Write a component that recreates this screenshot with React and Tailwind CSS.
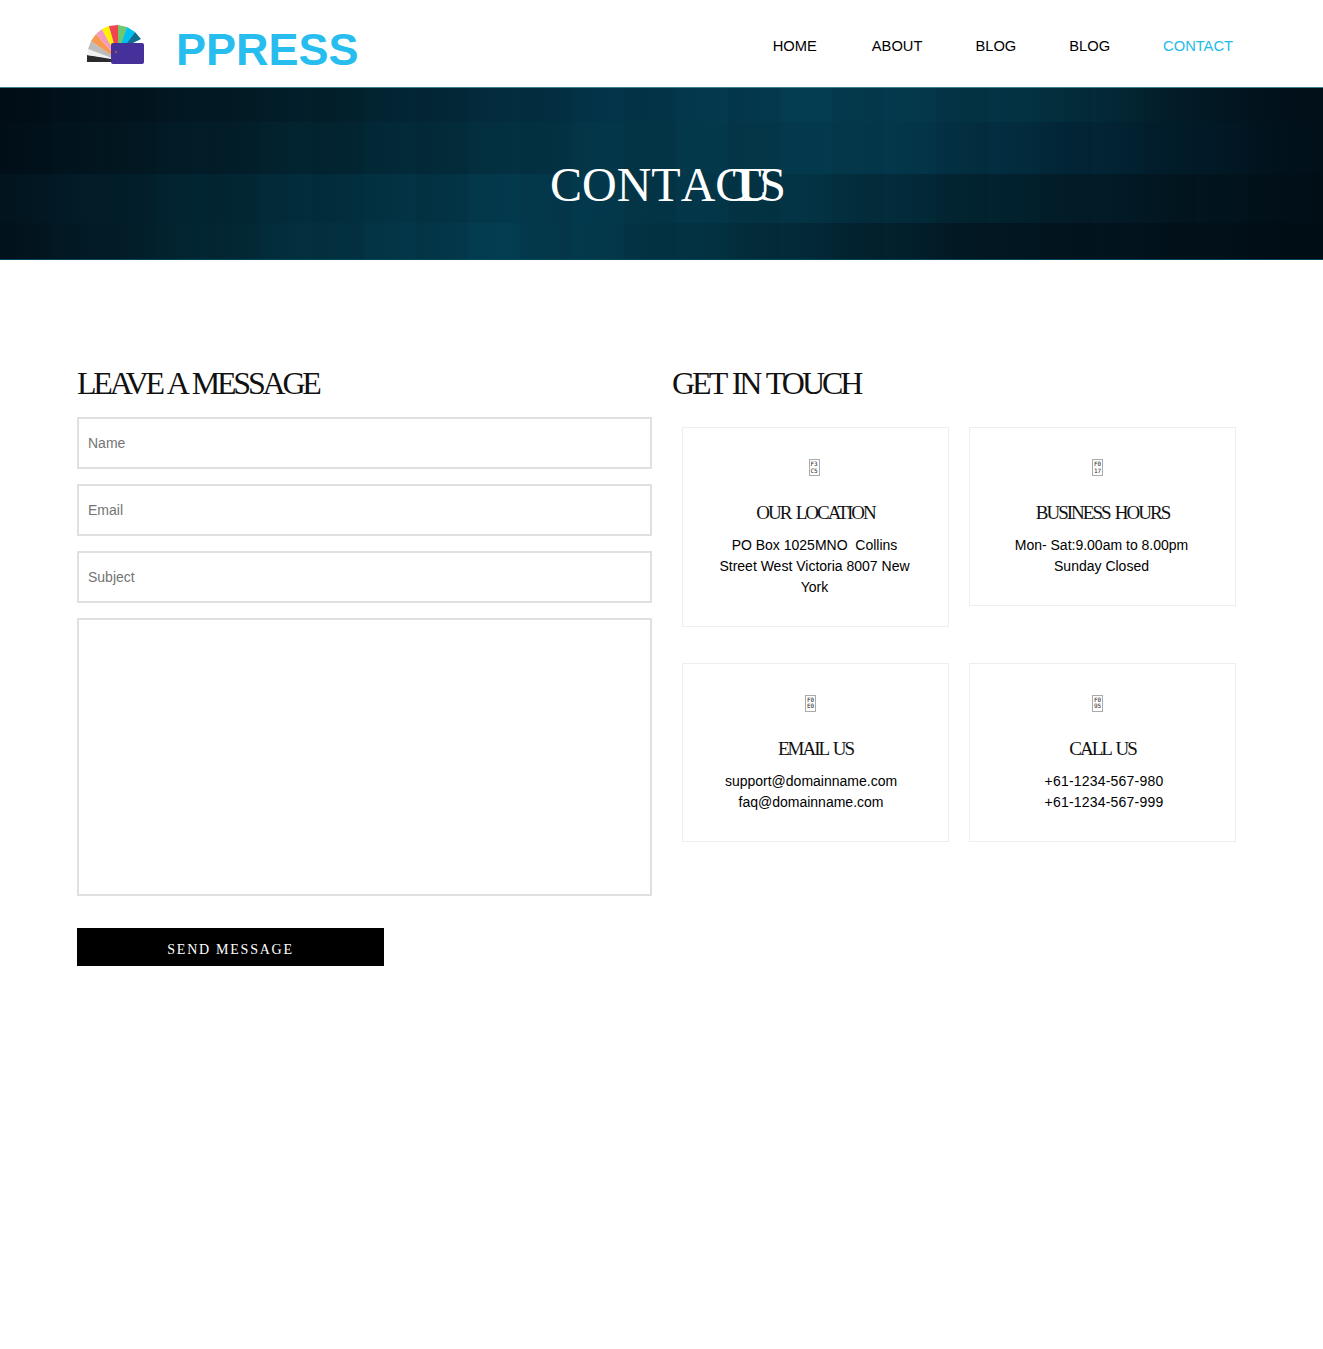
import React from 'react';

const navLinks = ['HOME', 'ABOUT', 'BLOG', 'BLOG', 'CONTACT'];

const cards = [
  {
    code: ['F3', 'C5'],
    title: 'OUR LOCATION',
    lines: ['PO Box 1025MNO  Collins', 'Street West Victoria 8007 New', 'York'],
    shift: 'pr-[2px]',
    boxShift: 'pr-[3px]',
  },
  {
    code: ['F0', '17'],
    title: 'BUSINESS HOURS',
    lines: ['Mon- Sat:9.00am to 8.00pm', 'Sunday Closed'],
    shift: 'pr-[2px]',
    boxShift: 'pr-[10px]',
  },
  {
    code: ['F0', 'E0'],
    title: 'EMAIL US',
    lines: ['support@domainname.com', 'faq@domainname.com'],
    shift: 'pr-[9px]',
    boxShift: 'pr-[10px]',
  },
  {
    code: ['F0', '95'],
    title: 'CALL US',
    lines: ['+61-1234-567-980', '+61-1234-567-999'],
    shift: 'pl-[3px] tracking-[0.2px]',
    boxShift: 'pr-[10px]',
  },
];

const serif = 'font-["Liberation_Serif",serif]';

const Logo = () => (
  <svg width="62" height="42" viewBox="0 0 62 42" className="-ml-[1px]">
    <path d="M2 32 L26 35 L26 39 L2 39 Z" fill="#2b2b2b" />
    <path d="M3 26 L2 32 L26 36 L26 34 Z" fill="#f1f1f1" />
    <path d="M6 18 L3 26 L27 35 L27 32 Z" fill="#bdbdbd" />
    <path d="M11 11 L6 18 L28 33 L28 30 Z" fill="#f9994f" />
    <path d="M17 6 L11 11 L29 31 L29 28 Z" fill="#f49ac1" />
    <path d="M24 3 L17 6 L30 30 L31 27 Z" fill="#fff200" />
    <path d="M33 2 L24 3 L31 28 L34 26 Z" fill="#f0444f" />
    <path d="M42 4 L33 2 L33 28 L36 26 Z" fill="#6fc86e" />
    <path d="M50 9 L42 4 L34 28 L38 26 Z" fill="#00bff3" />
    <path d="M56 16 L50 9 L36 28 L40 24 Z" fill="#0f6f93" />
    <rect x="26" y="20" width="33" height="21" rx="2" fill="#46309a" />
    <circle cx="31" cy="29" r="1" fill="#a8742a" />
  </svg>
);

// missing-glyph box: the icon font did not load in the original
const GlyphBox = ({ code, boxShift }) => (
  <div className={boxShift}>
    <div className="mx-auto flex h-[17px] w-[11px] flex-col items-center justify-center border border-[#aaaaaa] font-['DejaVu_Sans_Mono',monospace] text-[6px] leading-[6.5px] text-[#222222]">
      <span>{code[0]}</span>
      <span>{code[1]}</span>
    </div>
  </div>
);

const InfoCard = ({ card }) => (
  <div className="border border-[#eeeeee] px-[20px] pt-[31px] pb-[28px] text-center">
    <GlyphBox code={card.code} boxShift={card.boxShift} />
    <h4
      className={`mt-[25px] text-[19px] leading-[24px] tracking-[-2px] [word-spacing:2.5px] text-[#111111] ${serif}`}
    >
      {card.title}
    </h4>
    <p className={`mt-[10px] text-[14px] leading-[21px] whitespace-pre-wrap text-black ${card.shift}`}>
      {card.lines.map((line, i) => (
        <span key={i} className="block">
          {line}
        </span>
      ))}
    </p>
  </div>
);

const inputClass =
  'block h-[52px] w-full border-2 border-[#e0e0e0] bg-white px-[9px] text-[14px] text-black outline-none placeholder:text-[#757575]';

const headingClass = `text-[32px] leading-[37px] [word-spacing:2px] text-[#111111] ${serif}`;

export default function App() {
  return (
    <div className="min-h-[1349px] bg-white font-['Liberation_Sans',Arial,sans-serif]">
      <header className="flex h-[87px] items-center justify-between pr-[90px] pl-[86px]">
        <div className="flex items-center gap-[29px]">
          <Logo />
          <span className="mt-[12px] text-[45px] leading-none font-bold text-[#27bdee]">PPRESS</span>
        </div>
        <nav className="flex gap-[53px] pt-[5px] text-[14.7px] text-black">
          {navLinks.map((link, i) => (
            <a
              key={i}
              href="#"
              className={link === 'CONTACT' ? 'text-[#1cbbe8]' : link === 'HOME' ? 'mr-[2px]' : ''}
            >
              {link}
            </a>
          ))}
        </nav>
      </header>

      <section className="relative flex h-[173px] items-center justify-center overflow-hidden border-t border-b border-t-[#3f7f96] border-b-[#04465c] bg-[#02202c]">
        <div className="absolute inset-0 flex flex-col">
          <div className="h-[34px] bg-[linear-gradient(90deg,#010d16_0%,#02202c_25%,#033348_45%,#043d52_62%,#03303f_80%,#021722_92%,#010f18_100%)]" />
          <div className="h-[53px] bg-[linear-gradient(90deg,#010f18_0%,#02212d_20%,#033648_45%,#043a4e_65%,#02283a_80%,#010f18_100%)]" />
          <div className="h-[50px] bg-[linear-gradient(90deg,#021520_0%,#022a38_20%,#033a4e_40%,#033445_60%,#021f2c_78%,#010e16_100%)]" />
          <div className="h-[36px] bg-[linear-gradient(90deg,#02121c_0%,#032c3a_20%,#033d52_38%,#03303f_55%,#021722_75%,#010d15_100%)]" />
        </div>
        <div className="absolute inset-0 bg-[repeating-linear-gradient(90deg,rgba(0,0,0,0.05)_0px,rgba(0,0,0,0.05)_52px,transparent_52px,transparent_104px)]" />
        <h1 className={`relative mt-[22px] ml-[13px] text-[48px] leading-none [font-kerning:none] text-white ${serif}`}>
          <span>CONTA</span>
          <span className="tracking-[-15px]">C</span>
          <span className="tracking-[-18.5px]">{'T '}</span>
          <span className="tracking-[-12px]">U</span>
          <span>S</span>
        </h1>
      </section>

      <main className="flex pt-[105px] pl-[77px]">
        <div className="w-[575px]">
          <h2 className={`tracking-[-3.2px] ${headingClass}`}>LEAVE A MESSAGE</h2>
          <form className="mt-[15px] flex flex-col gap-[15px]">
            <input type="text" placeholder="Name" className={inputClass} />
            <input type="text" placeholder="Email" className={inputClass} />
            <input type="text" placeholder="Subject" className={inputClass} />
            <textarea className="block h-[278px] w-full resize-none border-2 border-[#e0e0e0] outline-none" />
            <button
              type="button"
              className={`mt-[17px] h-[38px] w-[307px] bg-black pt-[5px] text-[14px] tracking-[1.75px] text-white ${serif}`}
            >
              SEND MESSAGE
            </button>
          </form>
        </div>

        <div className="ml-[20px] w-[574px]">
          <h2 className={`tracking-[-3px] ${headingClass}`}>GET IN TOUCH</h2>
          <div className="mt-[25px] ml-[10px] grid w-[554px] grid-cols-[267px_267px] items-start gap-x-[20px] gap-y-[35.5px]">
            {cards.map((card) => (
              <InfoCard key={card.title} card={card} />
            ))}
          </div>
        </div>
      </main>
    </div>
  );
}
